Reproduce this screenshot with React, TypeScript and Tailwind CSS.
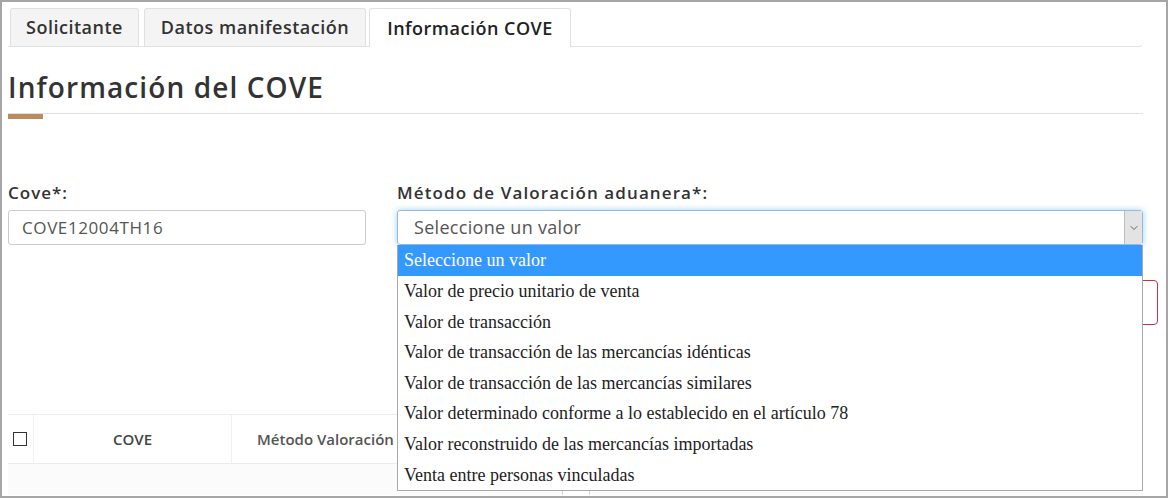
import { ChevronDown } from 'lucide-react';

const opciones = [
  'Seleccione un valor',
  'Valor de precio unitario de venta',
  'Valor de transacción',
  'Valor de transacción de las mercancías idénticas',
  'Valor de transacción de las mercancías similares',
  'Valor determinado conforme a lo establecido en el artículo 78',
  'Valor reconstruido de las mercancías importadas',
  'Venta entre personas vinculadas',
];

const sans = "font-['Open_Sans',_'Liberation_Sans',_sans-serif]";

function Tabs() {
  return (
    <div className="flex items-end h-[38px] w-[1135px] border-b border-[#e2e2e2] rounded-br-[4px]">
      <div className="w-[129px] h-[38px] ml-[2px] flex items-center justify-center bg-[#f4f4f4] border border-b-0 border-[#e0e0e0] rounded-t-[3px] text-[18px] tracking-[0.5px] font-semibold text-[#333]">
        Solicitante
      </div>
      <div className="w-[222px] h-[38px] ml-[5px] flex items-center justify-center bg-[#f4f4f4] border border-b-0 border-[#e0e0e0] rounded-t-[3px] text-[18px] tracking-[0.5px] font-semibold text-[#333]">
        Datos manifestación
      </div>
      <div className="w-[202px] h-[39px] -mb-px ml-[3px] flex items-center justify-center bg-white border border-b-0 border-[#e0e0e0] rounded-t-[3px] text-[18px] tracking-[0.5px] font-semibold text-[#222]">
        Información COVE
      </div>
    </div>
  );
}

export default function App() {
  return (
    <div className={`${sans} w-[1168px] h-[498px] overflow-hidden bg-white border-2 border-[#a6a6a6] pl-[6px] pt-[7px]`}>
      <Tabs />

      <h1 className="mt-[22px] h-[36px] leading-[36px] text-[28px] tracking-[1.1px] font-semibold text-[#333]">Información del COVE</h1>

      <div className="mt-[8px] w-[1135px] border-t border-[#e0e0e0]">
        <div className="w-[35px] h-[5px] bg-[#bc8a5c]" />
      </div>

      <div className="mt-[64px] flex gap-[31px]">
        <div className="w-[358px]">
          <label className="block leading-[20px] text-[17px] tracking-[1px] font-semibold text-[#333]">Cove*:</label>
          <div className="mt-[7px] h-[35px] flex items-center px-[13px] border border-[#cccccc] rounded-[3px] text-[17px] tracking-[0.6px] text-[#555]">
            COVE12004TH16
          </div>
        </div>

        <div className="w-[746px]">
          <label className="block leading-[20px] text-[17px] tracking-[1.1px] font-semibold text-[#333]">Método de Valoración aduanera*:</label>
          <div className="relative mt-[7px]">
            <div className="h-[35px] flex items-center border border-[#8fbbe6] rounded-[3px] shadow-[0_0_6px_rgba(102,175,233,0.6)]">
              <span className="flex-1 pl-[16px] text-[18px] tracking-[0.3px] text-[#555]">Seleccione un valor</span>
              <span className="w-[18px] h-[33px] flex items-center justify-center bg-[#e3e3e3] border-l border-[#bdbdbd]">
                <ChevronDown className="w-[12px] h-[12px] text-[#666]" strokeWidth={2} />
              </span>
            </div>
            <ul className="absolute left-0 right-0 top-[35px] z-10 bg-white border border-[#a9a9a9] border-t-0 font-['Liberation_Serif',_serif] text-[18px] text-[#222]">
              {opciones.map((o, i) => (
                <li
                  key={o}
                  className={
                    i === 0
                      ? 'h-[31px] leading-[31px] pl-[6px] bg-[#3399ff] text-white'
                      : 'h-[30.6px] leading-[30.6px] pl-[6px]'
                  }
                >
                  {o}
                </li>
              ))}
            </ul>
          </div>
        </div>
      </div>

      <div className="mt-[35px] w-[1150px] flex justify-end">
        <div className="w-[110px] h-[45px] border border-[#c2334f] rounded-[4px]" />
      </div>

      <div className="mt-[89px] w-[1135px]">
        <div className="h-[50px] flex items-center border-t border-b border-[#ececec] text-[15px]">
          <div className="w-[26px] h-full flex items-center justify-start pl-[5px] border-r border-[#f0f0f0]">
            <span className="w-[14px] h-[14px] border border-[#333] bg-white" />
          </div>
          <div className="w-[198px] h-full flex items-center justify-center border-r border-[#f0f0f0] font-semibold text-[#444]">COVE</div>
          <div className="w-[165px] overflow-hidden pl-[25px] font-semibold text-[#555] whitespace-nowrap">Método Valoración</div>
        </div>
        <div className="h-[31px] bg-[#fbfbfb] flex items-end">
          <div className="ml-[554px] w-[28px] h-[6px] border border-b-0 border-[#d6d6d6] bg-white" />
        </div>
      </div>
    </div>
  );
}
